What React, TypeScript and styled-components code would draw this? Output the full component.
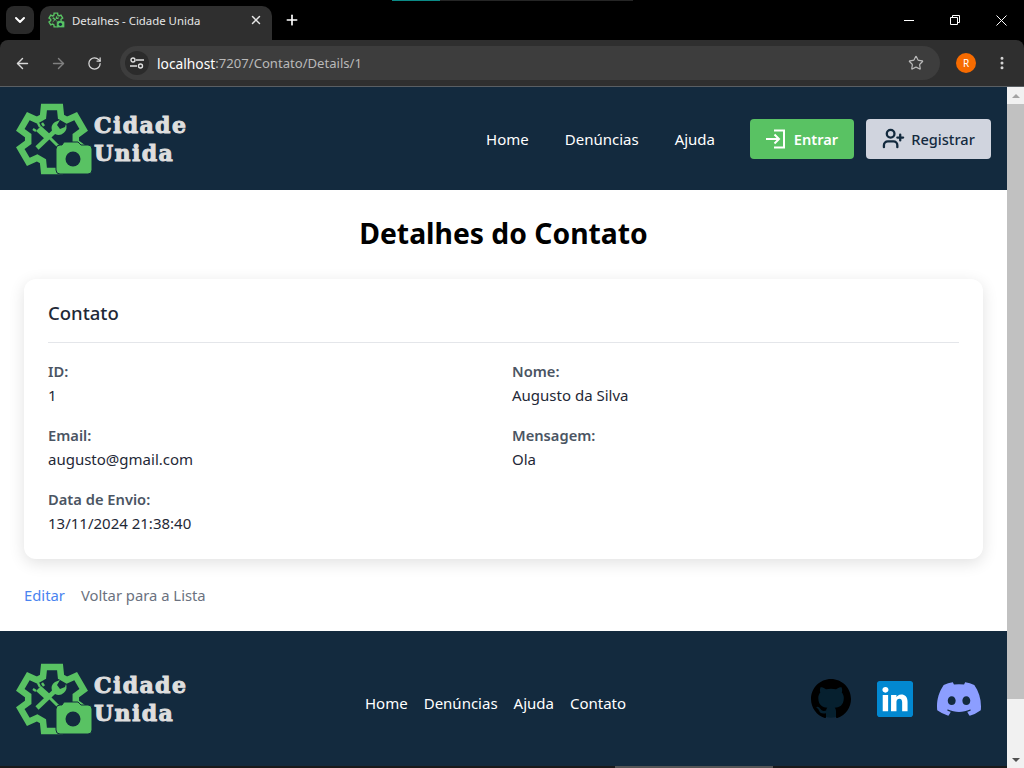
import styled, { createGlobalStyle } from "styled-components";
import { ArrowLeft, ArrowRight, ChevronDown, EllipsisVertical, Plus, RotateCw, Star, UserPlus, X } from "lucide-react";
import { BsDiscord, BsLinkedin } from "react-icons/bs";

const GlobalStyle = createGlobalStyle`
  html, body { margin: 0; padding: 0; height: 100%; overflow: hidden; }
  body { font-family: "Noto Sans", "Open Sans", sans-serif; background: #000; }
  * { box-sizing: border-box; }
`;

const Window = styled.div`
  width: 1024px;
  height: 768px;
  display: flex;
  flex-direction: column;
  overflow: hidden;
  background: #000;
`;

/* browser chrome */
const TabStrip = styled.div`
  position: relative;
  height: 40px;
  display: flex;
  align-items: flex-end;
  padding-left: 6px;
  color: #fff;
`;
const LoadLine = styled.div`
  position: absolute;
  top: 0;
  left: 392px;
  width: 241px;
  height: 1px;
  background: linear-gradient(to right, #0b8a86 0 48px, #252525 48px);
`;
const TabSearch = styled.div`
  width: 28px;
  height: 28px;
  margin: 0 6px 6px 0;
  border-radius: 8px;
  background: #2a2a2a;
  display: flex;
  align-items: center;
  justify-content: center;
`;
const Tab = styled.div`
  width: 232px;
  height: 34px;
  border-radius: 10px 10px 0 0;
  background: #2f2f2f;
  display: flex;
  align-items: center;
  padding: 0 9px 6px 8px;
  gap: 7px;
  font-size: 11.4px;
  color: #e6e6e6;
`;
const TabTitle = styled.span`
  flex: 1;
  white-space: nowrap;
`;
const NewTab = styled.div`
  width: 40px;
  height: 34px;
  padding-bottom: 6px;
  display: flex;
  align-items: center;
  justify-content: center;
`;
const WindowControls = styled.div`
  margin-left: auto;
  height: 40px;
  display: flex;
  align-items: center;
`;
const WindowButton = styled.div`
  width: 46px;
  display: flex;
  justify-content: center;
`;
const ControlIcon = styled.svg`
  display: block;
`;
const Toolbar = styled.div`
  height: 46px;
  background: #2f2f2f;
  border-radius: 8px 8px 0 0;
  display: flex;
  align-items: center;
  padding: 0 10px 0 4px;
  color: #d8d8d8;
`;
const NavIcon = styled.div<{ $dim?: boolean }>`
  width: 36px;
  display: flex;
  justify-content: center;
  color: ${(p) => (p.$dim ? "#808080" : "#d8d8d8")};
`;
const Omnibox = styled.div`
  width: 820px;
  height: 34px;
  margin-left: 8px;
  border-radius: 17px;
  background: #3d3d3d;
  display: flex;
  align-items: center;
  padding: 0 16px 0 5px;
  font-size: 13.1px;
  color: #b9b9b9;
`;
const SiteInfo = styled.div`
  width: 24px;
  height: 24px;
  margin-right: 8px;
  border-radius: 50%;
  background: #2b2b2b;
  display: flex;
  align-items: center;
  justify-content: center;
`;
const Host = styled.span`
  color: #fff;
  font-size: 13.8px;
`;
const StarSlot = styled.div`
  margin-left: auto;
  display: flex;
`;
const Avatar = styled.div`
  width: 20px;
  height: 20px;
  margin-left: 16px;
  border-radius: 50%;
  background: #f76b00;
  color: #fff;
  font-size: 10px;
  display: flex;
  align-items: center;
  justify-content: center;
`;
const MenuSlot = styled.div`
  margin-left: 18px;
  display: flex;
`;
const Viewport = styled.div`
  flex: 1;
  display: flex;
  min-height: 0;
  border-top: 1px solid #5a5f63;
`;
const Scrollbar = styled.div`
  width: 17px;
  background: #f1f1f1;
  display: flex;
  flex-direction: column;
  align-items: center;
`;
const ScrollArrow = styled.div<{ $down?: boolean }>`
  height: 17px;
  flex: none;
  display: flex;
  align-items: center;
  justify-content: center;
  &::before {
    content: "";
    border-left: 4px solid transparent;
    border-right: 4px solid transparent;
    ${(p) => (p.$down ? "border-top: 4px solid #505050;" : "border-bottom: 4px solid #a3a3a3;")}
  }
`;
const ScrollThumb = styled.div`
  width: 100%;
  height: 595px;
  background: #c1c1c1;
`;
const ScrollRest = styled.div`
  flex: 1;
`;
const Page = styled.div`
  flex: 1;
  min-width: 0;
  display: flex;
  flex-direction: column;
  background: #fff;
`;

/* site header */
const Header = styled.header`
  height: 103px;
  flex: none;
  background: #132a3e;
  display: flex;
  align-items: center;
  justify-content: space-between;
  padding: 0 16px;
`;
const Brand = styled.div`
  width: 172px;
  display: flex;
  align-items: center;
`;
const Wordmark = styled.div`
  font-family: "DejaVu Serif", serif;
  font-weight: 900;
  font-size: 22px;
  line-height: 28px;
  letter-spacing: 1.4px;
  color: #dedede;
  -webkit-text-stroke: 1px #dedede;
`;
const HeaderRight = styled.div`
  display: flex;
  align-items: center;
`;
const HeaderNav = styled.nav`
  display: flex;
  gap: 36px;
  margin-right: 35px;
`;
const HeaderLink = styled.a`
  color: #fff;
  font-size: 15px;
`;
const ActionButton = styled.button<{ $primary?: boolean }>`
  height: 40px;
  width: ${(p) => (p.$primary ? "104px" : "125px")};
  margin-left: ${(p) => (p.$primary ? "0" : "12px")};
  padding: 0;
  border: none;
  border-radius: 4px;
  display: flex;
  align-items: center;
  justify-content: center;
  gap: ${(p) => (p.$primary ? "8px" : "6px")};
  font-family: inherit;
  font-size: 14.6px;
  font-weight: ${(p) => (p.$primary ? 600 : 500)};
  background: ${(p) => (p.$primary ? "#59c263" : "#d0d4de")};
  color: ${(p) => (p.$primary ? "#fff" : "#132a3e")};
`;

/* content */
const Main = styled.main`
  flex: 1;
  min-height: 0;
  padding: 0 24px;
`;
const Title = styled.h1`
  margin: 23px 0 26px;
  height: 40px;
  line-height: 40px;
  text-align: center;
  font-size: 28.3px;
  font-weight: 700;
  color: #000;
`;
const Card = styled.section`
  height: 280px;
  padding: 24px;
  border-radius: 12px;
  background: #fff;
  box-shadow: 0 4px 16px rgba(0, 0, 0, 0.12);
`;
const CardTitle = styled.h2`
  margin: 0;
  height: 40px;
  line-height: 20px;
  padding-bottom: 19px;
  border-bottom: 1px solid #e4e6ea;
  font-size: 18.5px;
  font-weight: 500;
  color: #1f2937;
`;
const FieldGrid = styled.div`
  margin-top: 16px;
  display: grid;
  grid-template-columns: 464px 1fr;
  row-gap: 16px;
`;
const Field = styled.div`
  line-height: 24px;
  font-size: 15px;
`;
const FieldLabel = styled.div`
  font-size: 14.7px;
  font-weight: 600;
  color: #4b5563;
`;
const FieldValue = styled.div`
  color: #1f2937;
`;
const Links = styled.div`
  margin-top: 24px;
  display: flex;
  gap: 16px;
  line-height: 24px;
  font-size: 14.8px;
`;
const EditLink = styled.a`
  color: #4a84f0;
`;
const BackLink = styled.a`
  color: #6b7280;
`;

/* footer */
const Footer = styled.footer`
  height: 135px;
  flex: none;
  background: #132a3e;
  display: flex;
  align-items: flex-start;
  padding: 31px 16px 0;
`;
const FooterNav = styled.nav`
  display: flex;
  gap: 16px;
  margin: 27px 0 0 177px;
`;
const FooterLink = styled.a`
  color: #fff;
  font-size: 15px;
  line-height: 28px;
`;
const Socials = styled.div`
  margin-left: auto;
  display: flex;
  align-items: center;
  gap: 24px;
  height: 74px;
  padding-right: 10px;
`;
const GithubMark = styled.svg`
  margin-right: 2px;
`;
const LinkedinMark = styled.div`
  width: 36px;
  height: 36px;
  border-radius: 4px;
  background: linear-gradient(#fff, #fff) center / 28px 28px no-repeat;
  color: #0288d1;
  display: flex;
`;
const BottomEdge = styled.div`
  height: 2px;
  flex: none;
  background: linear-gradient(to right, #1a1a1a 615px, #555 615px 773px, #1a1a1a 773px);
`;

const gearPoints = [-90, -30, 30, 90, 150, 210]
  .flatMap((a) =>
    [[-22, 24], [-14, 33], [14, 33], [22, 24]].map(([d, r]) => {
      const t = ((a + d) * Math.PI) / 180;
      return `${(42 + r * Math.cos(t)).toFixed(1)},${(41 + r * Math.sin(t)).toFixed(1)}`;
    }),
  )
  .join(" ");

function LogoMark({ width, height }: { width: number; height: number }) {
  return (
    <svg width={width} height={height} viewBox="6 4 78 74" fill="none">
      <polygon points={gearPoints} stroke="#59c263" strokeWidth="6.5" strokeLinejoin="miter" />
      {/* wrench */}
      <path d="M27 50 L47 31" stroke="#59c263" strokeWidth="4.5" />
      <path d="M42 33 a8 8 0 0 1 3-9 l5-2 -3 5 3 4 5-2 1-3 a8 8 0 0 1-11 10z" fill="#59c263" />
      {/* screwdriver */}
      <path d="M36 36 L52 52" stroke="#59c263" strokeWidth="3" />
      <path d="M26 33 l5-5 10 9 -5 5z" fill="#59c263" />
      <path d="M30 29 l-2-4 M34 28 l-2-3 M26 33 l-3-2" stroke="#59c263" strokeWidth="2.4" />
      {/* camera */}
      <path
        d="M50 47 h2 l2-3 h14 l3 3 h7 q4 0 4 4 v21 q0 4-4 4 H50 q-4 0-4-4 V51 q0-4 4-4z"
        fill="#59c263"
        stroke="#132a3e"
        strokeWidth="1"
      />
      <circle cx="63" cy="61" r="7.5" fill="#132a3e" />
    </svg>
  );
}

function Logo() {
  return (
    <Brand>
      <LogoMark width={78} height={74} />
      <Wordmark>
        Cidade
        <br />
        Unida
      </Wordmark>
    </Brand>
  );
}

export default function App() {
  return (
    <Window>
      <GlobalStyle />
      <TabStrip>
        <LoadLine />
        <TabSearch>
          <ChevronDown size={16} strokeWidth={3} />
        </TabSearch>
        <Tab>
          <LogoMark width={17} height={16} />
          <TabTitle>Detalhes - Cidade Unida</TabTitle>
          <X size={14} strokeWidth={2.5} />
        </Tab>
        <NewTab>
          <Plus size={16} strokeWidth={2.5} />
        </NewTab>
        <WindowControls>
          <WindowButton>
            <ControlIcon width="10" height="10" viewBox="0 0 10 10" stroke="#fff">
              <path d="M0 5.5h10" />
            </ControlIcon>
          </WindowButton>
          <WindowButton>
            <ControlIcon width="10" height="10" viewBox="0 0 10 10" fill="none" stroke="#fff">
              <path d="M.5 2.5h7v7h-7zM2.5 2.5v-2h7v7h-2" />
            </ControlIcon>
          </WindowButton>
          <WindowButton>
            <ControlIcon width="11" height="11" viewBox="0 0 11 11" stroke="#fff">
              <path d="M.5.5l10 10M10.5.5l-10 10" />
            </ControlIcon>
          </WindowButton>
        </WindowControls>
      </TabStrip>
      <Toolbar>
        <NavIcon>
          <ArrowLeft size={17} strokeWidth={2} />
        </NavIcon>
        <NavIcon $dim>
          <ArrowRight size={17} strokeWidth={2} />
        </NavIcon>
        <NavIcon>
          <RotateCw size={15} strokeWidth={2} />
        </NavIcon>
        <Omnibox>
          <SiteInfo>
            <svg width="14" height="12" viewBox="0 0 14 12" fill="none" stroke="#e0e0e0" strokeWidth="1.4">
              <path d="M6 3h8M0 9h7" />
              <circle cx="3" cy="3" r="2" />
              <circle cx="10.5" cy="9" r="2" />
            </svg>
          </SiteInfo>
          <Host>localhost</Host>:7207/Contato/Details/1
          <StarSlot>
            <Star size={16} strokeWidth={1.8} />
          </StarSlot>
        </Omnibox>
        <Avatar>R</Avatar>
        <MenuSlot>
          <EllipsisVertical size={16} strokeWidth={2.5} />
        </MenuSlot>
      </Toolbar>
      <Viewport>
        <Page>
          <Header>
            <Logo />
            <HeaderRight>
              <HeaderNav>
                <HeaderLink>Home</HeaderLink>
                <HeaderLink>Denúncias</HeaderLink>
                <HeaderLink>Ajuda</HeaderLink>
              </HeaderNav>
              <ActionButton $primary>
                <svg width="20" height="20" viewBox="0 0 20 20" fill="none" stroke="currentColor" strokeWidth="2">
                  <path d="M8 1.5h10v17H8M0 10h12.5M8.5 5.5l4.5 4.5-4.5 4.5" />
                </svg>
                Entrar
              </ActionButton>
              <ActionButton>
                <UserPlus size={23} strokeWidth={2.4} />
                Registrar
              </ActionButton>
            </HeaderRight>
          </Header>
          <Main>
            <Title>Detalhes do Contato</Title>
            <Card>
              <CardTitle>Contato</CardTitle>
              <FieldGrid>
                <Field>
                  <FieldLabel>ID:</FieldLabel>
                  <FieldValue>1</FieldValue>
                </Field>
                <Field>
                  <FieldLabel>Nome:</FieldLabel>
                  <FieldValue>Augusto da Silva</FieldValue>
                </Field>
                <Field>
                  <FieldLabel>Email:</FieldLabel>
                  <FieldValue>augusto@gmail.com</FieldValue>
                </Field>
                <Field>
                  <FieldLabel>Mensagem:</FieldLabel>
                  <FieldValue>Ola</FieldValue>
                </Field>
                <Field>
                  <FieldLabel>Data de Envio:</FieldLabel>
                  <FieldValue>13/11/2024 21:38:40</FieldValue>
                </Field>
              </FieldGrid>
            </Card>
            <Links>
              <EditLink>Editar</EditLink>
              <BackLink>Voltar para a Lista</BackLink>
            </Links>
          </Main>
          <Footer>
            <Logo />
            <FooterNav>
              <FooterLink>Home</FooterLink>
              <FooterLink>Denúncias</FooterLink>
              <FooterLink>Ajuda</FooterLink>
              <FooterLink>Contato</FooterLink>
            </FooterNav>
            <Socials>
              <GithubMark width="40" height="40" viewBox="0 0 16 16">
                <circle cx="8" cy="8" r="7.5" fill="#06202f" />
                <path
                  fill="#000"
                  d="M8 0C3.58 0 0 3.58 0 8c0 3.54 2.29 6.53 5.47 7.59.4.07.55-.17.55-.38 0-.19-.01-.82-.01-1.49-2.01.37-2.53-.49-2.69-.94-.09-.23-.48-.94-.82-1.13-.28-.15-.68-.52-.01-.53.63-.01 1.08.58 1.23.82.72 1.21 1.87.87 2.33.66.07-.52.28-.87.51-1.07-1.78-.2-3.64-.89-3.64-3.95 0-.87.31-1.59.82-2.15-.08-.2-.36-1.02.08-2.12 0 0 .67-.21 2.2.82.64-.18 1.32-.27 2-.27s1.36.09 2 .27c1.53-1.04 2.2-.82 2.2-.82.44 1.1.16 1.92.08 2.12.51.56.82 1.27.82 2.15 0 3.07-1.87 3.75-3.65 3.95.29.25.54.73.54 1.48 0 1.07-.01 1.93-.01 2.2 0 .21.15.46.55.38A8.01 8.01 0 0 0 16 8c0-4.42-3.58-8-8-8z"
                />
              </GithubMark>
              <LinkedinMark>
                <BsLinkedin size={36} />
              </LinkedinMark>
              <BsDiscord size={44} color="#8c9eff" />
            </Socials>
          </Footer>
          <BottomEdge />
        </Page>
        <Scrollbar>
          <ScrollArrow />
          <ScrollThumb />
          <ScrollRest />
          <ScrollArrow $down />
        </Scrollbar>
      </Viewport>
    </Window>
  );
}
